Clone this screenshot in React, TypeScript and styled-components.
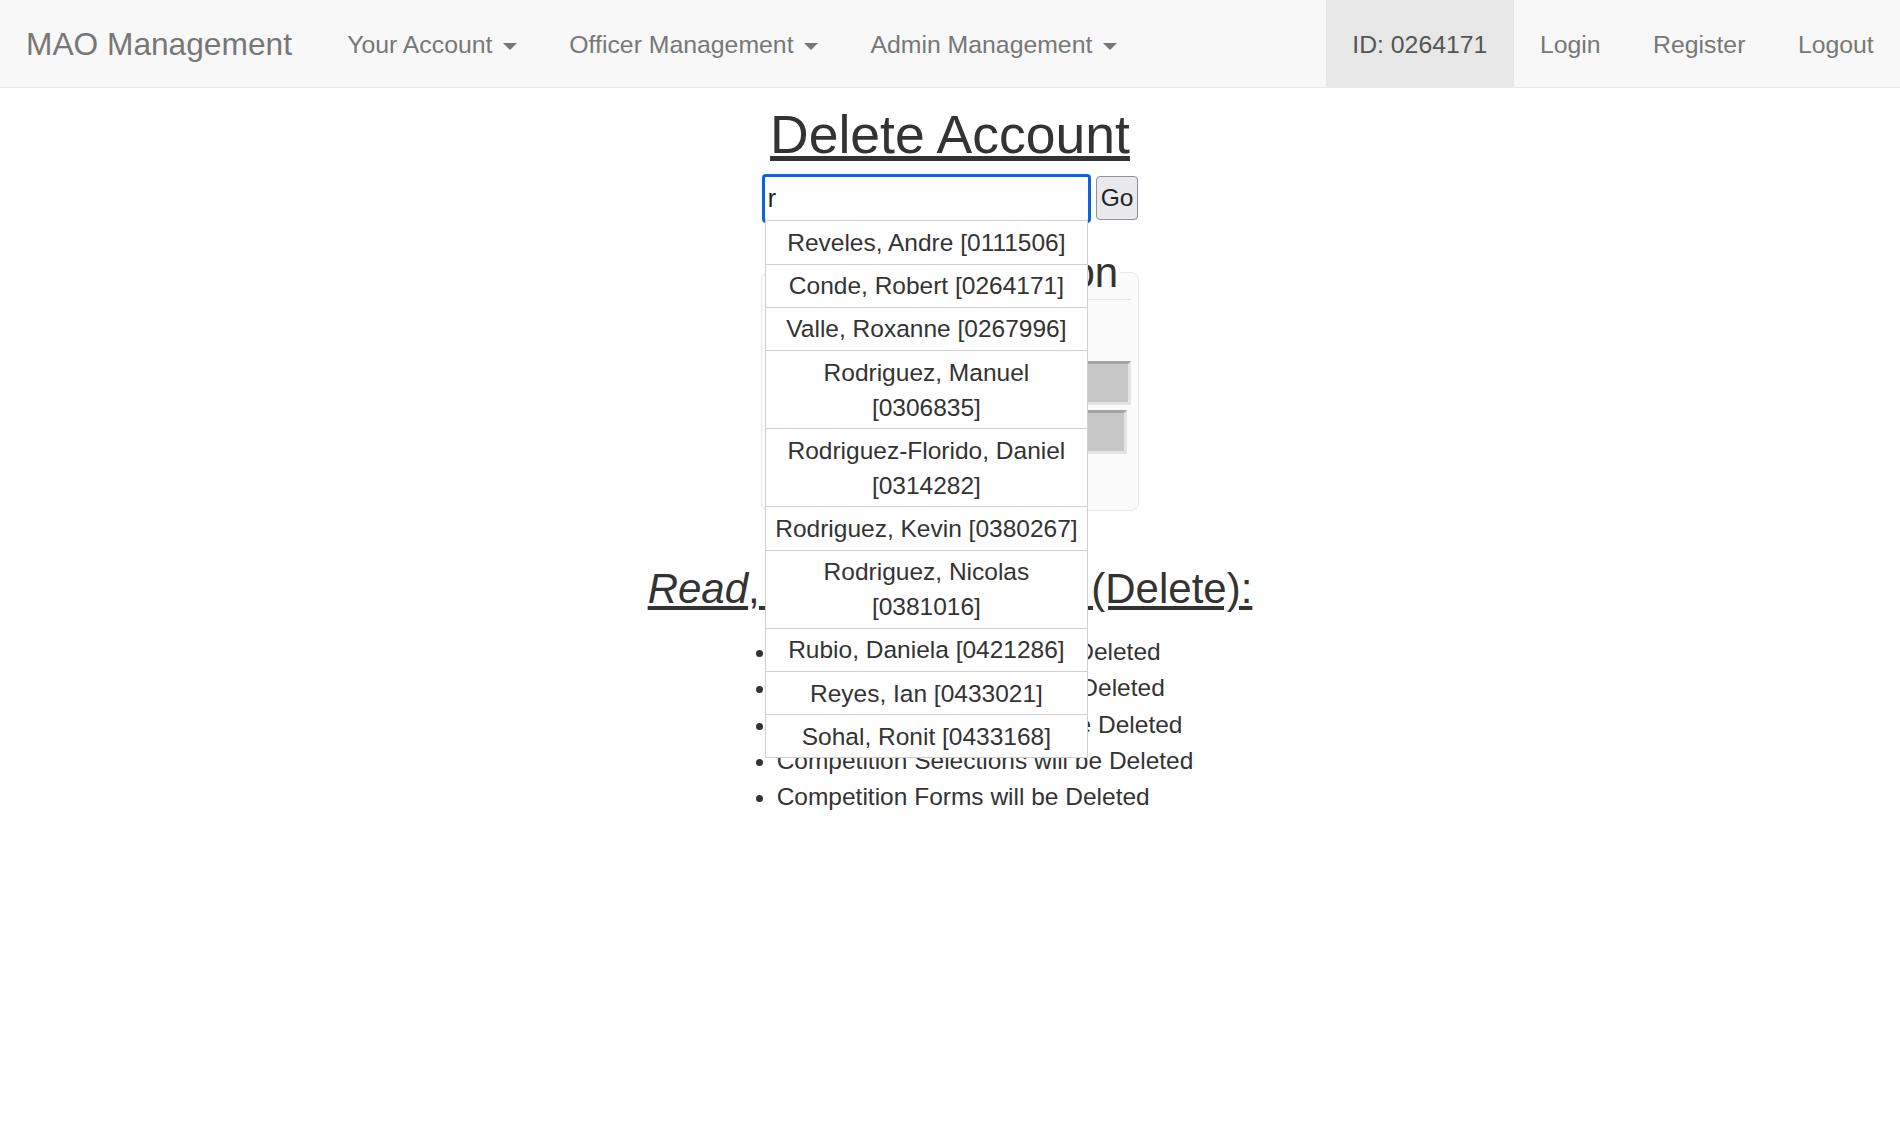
import React from "react";
import styled, { createGlobalStyle } from "styled-components";

interface NavItem {
  label: string;
  dropdown?: boolean;
  active?: boolean;
}

const leftLinks: NavItem[] = [
  { label: "Your Account", dropdown: true },
  { label: "Officer Management", dropdown: true },
  { label: "Admin Management", dropdown: true },
];

const rightLinks: NavItem[] = [
  { label: "ID: 0264171", active: true },
  { label: "Login" },
  { label: "Register" },
  { label: "Logout" },
];

const suggestions: string[] = [
  "Reveles, Andre [0111506]",
  "Conde, Robert [0264171]",
  "Valle, Roxanne [0267996]",
  "Rodriguez, Manuel [0306835]",
  "Rodriguez-Florido, Daniel [0314282]",
  "Rodriguez, Kevin [0380267]",
  "Rodriguez, Nicolas [0381016]",
  "Rubio, Daniela [0421286]",
  "Reyes, Ian [0433021]",
  "Sohal, Ronit [0433168]",
];

const consequences: string[] = [
  "Account Information will be Deleted",
  "Attendance Records will be Deleted",
  "Competition Rankings will be Deleted",
  "Competition Selections will be Deleted",
  "Competition Forms will be Deleted",
];

const GlobalStyle = createGlobalStyle`
  html, body {
    margin: 0;
    padding: 0;
    background: #fff;
  }
  body {
    font-family: "Liberation Sans", Arial, Helvetica, sans-serif;
    color: #333;
  }
  * {
    box-sizing: border-box;
  }
`;

const Navbar = styled.nav`
  display: flex;
  align-items: stretch;
  height: 88px;
  background: #f8f8f8;
  border-bottom: 1px solid #e7e7e7;
`;

const Brand = styled.a`
  padding: 2px 29px 0 26px;
  font-size: 31.7px;
  line-height: 85px;
  color: #777;
  text-decoration: none;
  white-space: nowrap;
`;

const NavList = styled.ul<{ $right?: boolean }>`
  display: flex;
  margin: 0;
  margin-left: ${(p) => (p.$right ? "auto" : "0")};
  padding: 0;
  list-style: none;
`;

const NavLink = styled.a<{ $active?: boolean }>`
  display: block;
  padding: 2px 26.25px 0;
  font-size: 24.8px;
  line-height: 85px;
  white-space: nowrap;
  text-decoration: none;
  color: ${(p) => (p.$active ? "#555" : "#777")};
  background: ${(p) => (p.$active ? "#e7e7e7" : "transparent")};
`;

const Caret = styled.span`
  display: inline-block;
  width: 0;
  height: 0;
  margin-left: 3.5px;
  vertical-align: middle;
  border-top: 7px solid #777;
  border-right: 7px solid transparent;
  border-left: 7px solid transparent;
`;

const Main = styled.main`
  text-align: center;
`;

const Title = styled.h1`
  margin: 18px 0 0;
  font-size: 53.5px;
  font-weight: 500;
  line-height: 58.8px;
  text-decoration: underline;
`;

const SearchForm = styled.form`
  display: flex;
  justify-content: center;
  align-items: center;
  gap: 5px;
  margin-top: 9.2px;
`;

const SearchWrap = styled.div`
  position: relative;
`;

const SearchInput = styled.input`
  display: block;
  width: 329px;
  height: 49px;
  padding: 0 3px;
  border: 3px solid #0f61e2;
  border-radius: 4px;
  outline: none;
  font-family: inherit;
  font-size: 25px;
  color: #222;
  background: #fff;
`;

const GoButton = styled.button`
  height: 44px;
  padding: 0 4px;
  border: 1px solid #8f8f9d;
  border-radius: 4px;
  background: #e9e9ed;
  font-family: inherit;
  font-size: 24.5px;
  color: #222;
`;

const Suggestions = styled.ul`
  position: absolute;
  top: 46.5px;
  left: 3px;
  z-index: 10;
  width: 323.5px;
  margin: 0;
  padding: 0;
  list-style: none;
  background: #fff;
  border: 1px solid #d0d0d0;
  border-top: 0;
`;

const Suggestion = styled.li`
  padding: 3.6px 4px;
  border-top: 1px solid #d0d0d0;
  font-size: 24.5px;
  line-height: 35px;
  text-align: center;
  color: #333;
`;

const Panel = styled.fieldset`
  width: 378px;
  min-width: 0;
  margin: 26.9px auto 0;
  padding: 0 7px 56px;
  border: 1px solid #e8e8e8;
  border-radius: 8px;
  background: #fbfbfb;
`;

const PanelLegend = styled.legend`
  margin: 0 auto;
  padding: 0 2px;
  font-size: 42px;
  font-weight: 500;
  line-height: 46.2px;
  color: #333;
`;

const Divider = styled.div`
  margin-top: 2.9px;
  border-top: 1px solid #e5e5e5;
`;

const GrayBlock = styled.div<{ $width: number; $gap: number }>`
  width: ${(p) => p.$width}px;
  height: 44px;
  margin: ${(p) => p.$gap}px auto 0;
  background: #c6c6c6;
  border: 3px solid;
  border-color: #a3a3a3 #e4e4e4 #e4e4e4 #a3a3a3;
`;

const Notice = styled.h3`
  margin: 55.4px 0 0;
  font-size: 42px;
  font-weight: 500;
  line-height: 46.2px;
  text-decoration: underline;
`;

const ConsequenceList = styled.ul`
  display: inline-block;
  margin: 21.5px 0 0;
  padding-left: 70px;
  text-align: left;
`;

const Consequence = styled.li`
  font-size: 24.5px;
  line-height: 36.3px;
`;

export default function App() {
  return (
    <>
      <GlobalStyle />
      <Navbar>
        <Brand href="#">MAO Management</Brand>
        <NavList>
          {leftLinks.map((item) => (
            <li key={item.label}>
              <NavLink href="#">
                {item.label} {item.dropdown && <Caret />}
              </NavLink>
            </li>
          ))}
        </NavList>
        <NavList $right>
          {rightLinks.map((item) => (
            <li key={item.label}>
              <NavLink href="#" $active={item.active}>
                {item.label}
              </NavLink>
            </li>
          ))}
        </NavList>
      </Navbar>
      <Main>
        <Title>Delete Account</Title>
        <SearchForm onSubmit={(e) => e.preventDefault()}>
          <SearchWrap>
            <SearchInput type="text" defaultValue="r" />
            <Suggestions>
              {suggestions.map((s) => (
                <Suggestion key={s}>{s}</Suggestion>
              ))}
            </Suggestions>
          </SearchWrap>
          <GoButton type="submit">Go</GoButton>
        </SearchForm>
        <Panel>
          <PanelLegend>Account Selection</PanelLegend>
          <Divider />
          <GrayBlock $width={362} $gap={61} />
          <GrayBlock $width={354} $gap={5} />
        </Panel>
        <Notice>
          <i>Read</i>, Before You Click (Delete):
        </Notice>
        <div>
          <ConsequenceList>
            {consequences.map((c) => (
              <Consequence key={c}>{c}</Consequence>
            ))}
          </ConsequenceList>
        </div>
      </Main>
    </>
  );
}
